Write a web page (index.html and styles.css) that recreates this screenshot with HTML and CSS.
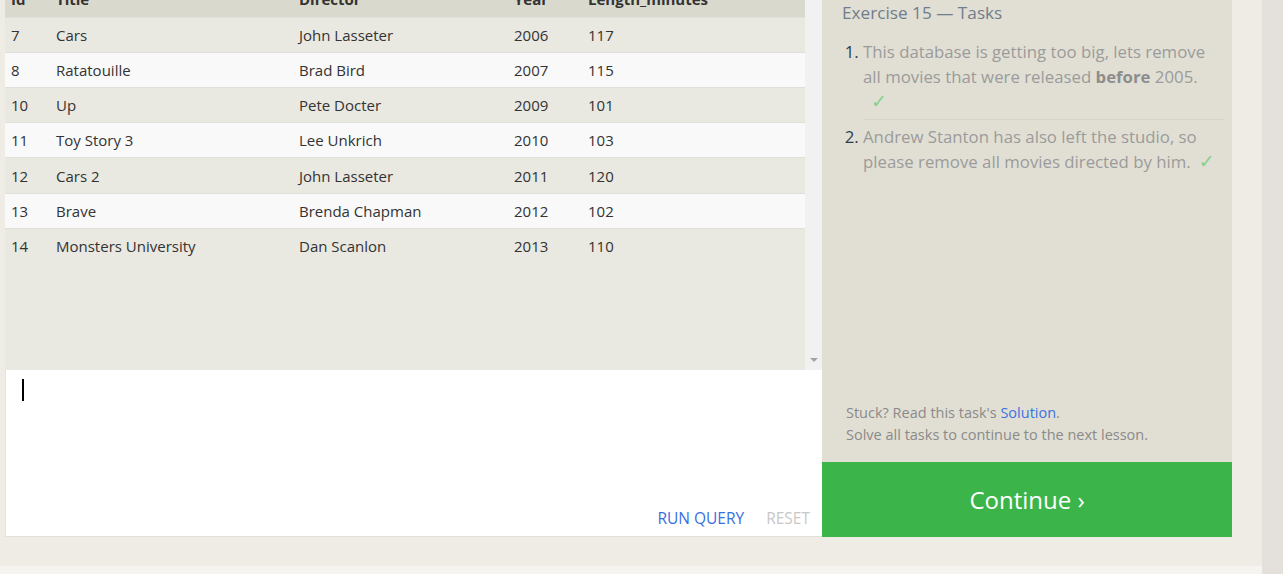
FILE: index.html
```html
<!DOCTYPE html>
<html>
<head>
<meta charset="utf-8">
<link rel="stylesheet" href="styles.css">
</head>
<body>
<div class="frame">
  <div class="page">
    <div class="main">
      <div class="left">
        <div class="results">
          <div class="table-wrap">
            <table class="tbl">
              <thead>
                <tr><th class="c-id">Id</th><th class="c-title">Title</th><th class="c-dir">Director</th><th class="c-year">Year</th><th>Length_minutes</th></tr>
              </thead>
              <tbody>
                <tr><td>7</td><td>Cars</td><td>John Lasseter</td><td>2006</td><td>117</td></tr>
                <tr><td>8</td><td>Ratatouille</td><td>Brad Bird</td><td>2007</td><td>115</td></tr>
                <tr><td>10</td><td>Up</td><td>Pete Docter</td><td>2009</td><td>101</td></tr>
                <tr><td>11</td><td>Toy Story 3</td><td>Lee Unkrich</td><td>2010</td><td>103</td></tr>
                <tr><td>12</td><td>Cars 2</td><td>John Lasseter</td><td>2011</td><td>120</td></tr>
                <tr><td>13</td><td>Brave</td><td>Brenda Chapman</td><td>2012</td><td>102</td></tr>
                <tr><td>14</td><td>Monsters University</td><td>Dan Scanlon</td><td>2013</td><td>110</td></tr>
              </tbody>
            </table>
          </div>
          <div class="vscroll"><span class="arrow"></span></div>
        </div>
        <div class="editor">
          <div class="editor-area"><span class="caret"></span></div>
          <div class="editor-actions">
            <span class="btn-run">RUN QUERY</span>
            <span class="btn-reset">RESET</span>
          </div>
        </div>
      </div>
      <div class="tasks">
        <div class="tasks-top">
          <h3 class="tasks-title">Exercise 15 — Tasks</h3>
          <ol class="task-list">
            <li class="task">This database is getting too big, lets remove all movies that were released <b>before</b> 2005. <span class="check check-wrap">✓</span></li>
            <li class="task">Andrew Stanton has also left the studio, so please remove all movies directed by him.<span class="check">✓</span></li>
          </ol>
        </div>
        <div class="tasks-help">
          <div>Stuck? Read this task's <a class="link">Solution</a>.</div>
          <div>Solve all tasks to continue to the next lesson.</div>
        </div>
        <div class="continue">Continue ›</div>
      </div>
    </div>
    <div class="footer"></div>
  </div>
  <div class="side-strip"></div>
</div>
</body>
</html>
```

FILE: styles.css
```css
* { box-sizing: border-box; }
html, body { margin: 0; padding: 0; }
body {
  font-family: "Open Sans", "Liberation Sans", sans-serif;
  background: #f5f4f0;
  width: 1283px;
  height: 574px;
  overflow: hidden;
}
.frame { display: flex; height: 574px; }
.page { width: 1262px; display: flex; flex-direction: column; }
.side-strip { width: 21px; background: #e4e0dc; }
.main {
  height: 566px;
  background: #efece6;
  display: flex;
  padding-left: 5px;
  align-items: flex-start;
}
.footer { flex: 1; background: #f5f4f0; }

.left { width: 817px; display: flex; flex-direction: column; }
.results { height: 370px; display: flex; background: #e9e8e1; }
.table-wrap { flex: 1; overflow: hidden; }
.vscroll {
  width: 17px;
  background: #f1f1f1;
  display: flex;
  align-items: flex-end;
  justify-content: center;
  padding-bottom: 8px;
}
.arrow {
  width: 0; height: 0;
  border-left: 4px solid transparent;
  border-right: 4px solid transparent;
  border-top: 4px solid #a3a3a3;
}
.tbl {
  width: 100%;
  border-collapse: collapse;
  margin-top: -18px;
  font-size: 15px;
  color: #333;
}
.tbl th, .tbl td {
  height: 35.2px;
  padding: 0 6px;
  text-align: left;
  vertical-align: middle;
  white-space: nowrap;
}
.tbl th { background: #dad9ce; font-weight: 700; }
.tbl td { border-top: 1px solid #e0dfda; }
.tbl tbody tr:nth-child(odd) td { background: #e9e8e1; }
.tbl tbody tr:nth-child(even) td { background: #f9f9f9; }
.c-id { width: 45px; }
.c-title { width: 243px; }
.c-dir { width: 215px; }
.c-year { width: 74px; }

.editor {
  height: 167px;
  background: #fff;
  border-left: 1px solid #e6e3dc;
  border-bottom: 1px solid #e3e0d8;
  display: flex;
  flex-direction: column;
}
.editor-area { flex: 1; padding: 9px 0 0 16px; }
.caret { display: block; width: 2px; height: 22px; background: #000; }
.editor-actions {
  display: flex;
  justify-content: flex-end;
  gap: 22px;
  padding: 0 12px 7px 0;
  font-size: 15.5px;
  line-height: 22px;
}
.btn-run { color: #3a6fdf; }
.btn-reset { color: #c8c8c8; }

.tasks {
  width: 410px;
  height: 537px;
  background: #e1dfd4;
  display: flex;
  flex-direction: column;
}
.tasks-top { flex: 1; padding: 1px 8px 0 20px; }
.tasks-title {
  margin: 0;
  font-size: 17.2px;
  font-weight: 400;
  line-height: 24px;
  color: #717d8c;
}
.task-list {
  margin: 15px 0 0;
  padding-left: 21px;
  font-size: 16.8px;
  line-height: 24.5px;
  color: #9b9b9b;
}
.task-list li::marker { color: #2f3e4e; }
.task { padding: 0 0 5px; }
.task + .task { border-top: 1px solid #d6d4c9; padding-top: 5px; }
.task b { color: #8d8d8d; }
.check {
  margin-left: 8px;
  color: #86cf8f;
  font-family: "DejaVu Sans", sans-serif;
  font-size: 19px;
  line-height: 20px;
}
.check-wrap { display: block; margin-left: 8px; line-height: 25px; }

.tasks-help {
  padding: 0 0 16px 24px;
  font-size: 14.5px;
  line-height: 22px;
  color: #8a8a8a;
}
.link { color: #3a73e0; }
.continue {
  height: 75px;
  background: #3bb54a;
  color: #fff;
  font-size: 24px;
  display: flex;
  align-items: center;
  justify-content: center;
}
```
